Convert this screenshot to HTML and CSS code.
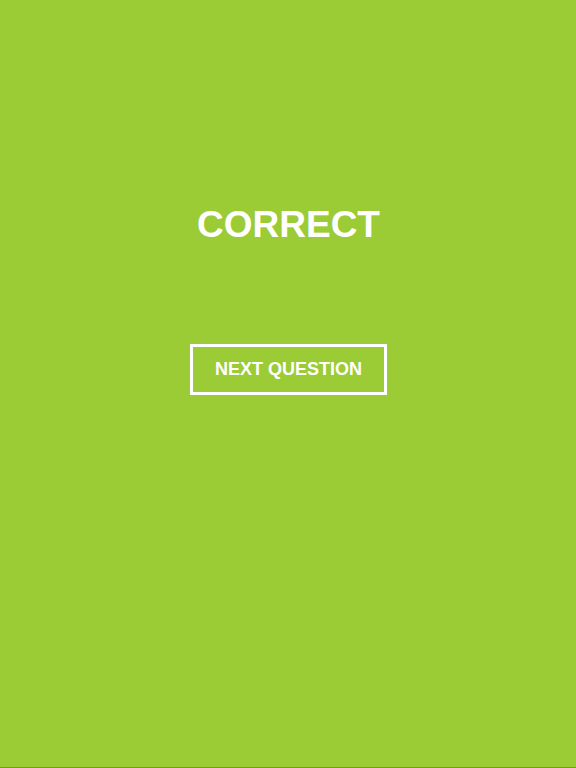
FILE: index.html
```html
<!DOCTYPE html>
<html>
<head>
<meta charset="utf-8">
<link rel="stylesheet" href="styles.css">
</head>
<body>
<div class="screen">
  <h1 class="result">CORRECT</h1>
  <button class="next">NEXT QUESTION</button>
</div>
</body>
</html>
```
FILE: styles.css
```css
html, body {
  margin: 0;
  padding: 0;
}
body {
  background: #9bcb35;
  font-family: "Liberation Sans", Arial, sans-serif;
}
.screen {
  box-sizing: border-box;
  height: 768px;
  display: flex;
  flex-direction: column;
  align-items: center;
  padding-top: 206px;
  border-bottom: 1px solid #6e9c24;
}
.result {
  margin: 0;
  color: #ffffff;
  font-size: 37px;
  line-height: 37px;
  font-weight: bold;
  padding-left: 1px;
}
.next {
  margin-top: 101px;
  background: transparent;
  border: 3px solid #ffffff;
  color: #ffffff;
  font-family: "Liberation Sans", Arial, sans-serif;
  font-weight: bold;
  font-size: 18px;
  line-height: 45px;
  height: 51px;
  padding: 0 22px;
  box-sizing: border-box;
  margin-left: 1px;
}
```
